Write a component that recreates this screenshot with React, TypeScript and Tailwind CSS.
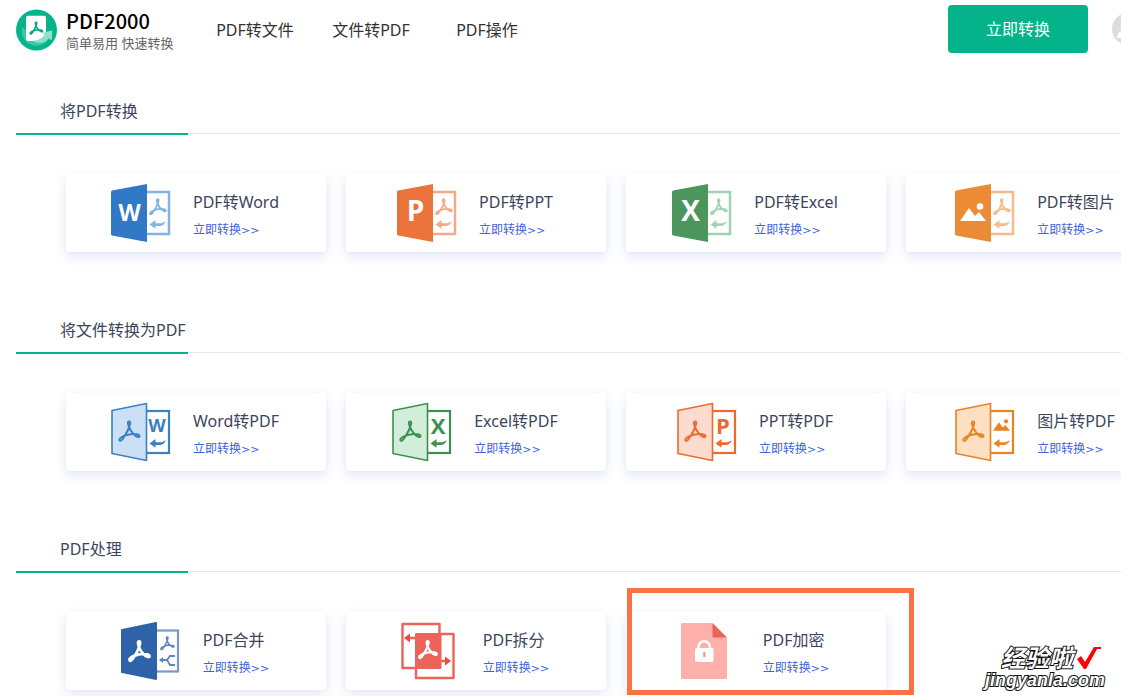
import React from 'react';

const ACROBAT =
  'M11.5 7.5C10.5 11 8.5 14 7 16.5C5 20 3 22.5 1.8 21.5C.3 20 3 17.8 7 16.3C10.5 15 14 14.3 17 14.6C21 14.8 22.8 15.6 22.5 17C22 18.8 18.5 17.3 16.5 15C14.5 13 12.5 10.5 11.5 7.5C10.2 4 9.8 1.5 11.6 1.5C13.5 1.5 12.8 4 11.5 7.5Z';

const Acrobat: React.FC<{ x: number; y: number; size: number; color: string; width: number }> = ({ x, y, size, color, width }) => (
  <svg x={x} y={y} width={size} height={size} viewBox="0 0 24 24" overflow="visible">
    <path d={ACROBAT} fill="none" stroke={color} strokeWidth={width} strokeLinejoin="round" />
  </svg>
);

const BackArrow: React.FC<{ color: string }> = ({ color }) => (
  <path d="M38.5 41.5L44.5 37V40.3H48C51 40.3 53 39.5 54.5 38C54 41.5 51.5 43 48 43H44.5V45.8Z" fill={color} />
);

const Picture: React.FC<{ x: number; y: number; width: number; color: string }> = ({ x, y, width, color }) => (
  <svg x={x} y={y} width={width} height={width} viewBox="0 0 26 26">
    <path d="M0 18L9 5L15 13L19 9L26 18Z" fill={color} />
    <circle cx="20" cy="3.5" r="3.3" fill={color} />
  </svg>
);

// Solid front cover with the source format, outlined PDF page behind
const FromPdfIcon: React.FC<{ front: string; back: string; letter?: string }> = ({ front, back, letter }) => (
  <svg className="h-15 w-15 shrink-0" viewBox="0 0 60 60" aria-hidden="true">
    <rect x="30" y="9" width="28" height="42" fill="#fff" stroke={back} strokeWidth="2.5" />
    <path d="M1 7.5L36 1V59L1 52.5Q0 52 0 51V9Q0 8 1 7.5Z" fill={front} />
    {letter ? (
      <text x="18.5" y="38" textAnchor="middle" fontSize={letter === 'W' ? 23 : 28} fontWeight="700" fill="#fff" className="font-['Open_Sans',sans-serif]">
        {letter}
      </text>
    ) : (
      <Picture x={5} y={20} width={26} color="#fff" />
    )}
    <Acrobat x={38} y={15} size={18} color={back} width={2.4} />
    <BackArrow color={back} />
  </svg>
);

// Outlined PDF cover in front, target format on the page behind
const ToPdfIcon: React.FC<{ line: string; fill: string; letter?: string }> = ({ line, fill, letter }) => (
  <svg className="h-15 w-15 shrink-0" viewBox="0 0 60 60" aria-hidden="true">
    <rect x="30" y="9" width="28" height="42" fill="#fff" stroke={line} strokeWidth="2.2" />
    <path d="M1 8.5L35.5 1.5V58.5L1 51.5Z" fill={fill} stroke={line} strokeWidth="1.6" strokeLinejoin="round" />
    <Acrobat x={7} y={18} size={23} color={line} width={2.1} />
    {letter ? (
      <text x="46" y={letter === 'W' ? 30 : 32} textAnchor="middle" fontSize={letter === 'W' ? 18 : 22} fontWeight="700" fill={line} className="font-['Open_Sans',sans-serif]">
        {letter}
      </text>
    ) : (
      <Picture x={38} y={17} width={17} color={line} />
    )}
    <BackArrow color={line} />
  </svg>
);

const MergeIcon = () => (
  <svg className="h-15 w-15 shrink-0" viewBox="0 0 60 60" aria-hidden="true">
    <rect x="30" y="9.5" width="27" height="41" fill="#fff" stroke="#7799c6" strokeWidth="2.2" />
    <path d="M1 8L35 1Q36 1 36 2V58Q36 59 35 59L1 52Q0 52 0 51V9Q0 8 1 8Z" fill="#2e62a9" />
    <Acrobat x={7} y={19} size={23} color="#fff" width={2.8} />
    <Acrobat x={39} y={15} size={15} color="#5f86bb" width={2.4} />
    <path d="M40 39H46L49 35H54M46 39L49 44H54" fill="none" stroke="#5f86bb" strokeWidth="1.8" />
    <path d="M38 39L42 36V42Z" fill="#5f86bb" />
  </svg>
);

const SplitIcon = () => (
  <svg className="h-15 w-15 shrink-0" viewBox="0 0 60 60" aria-hidden="true">
    <g fill="none" stroke="#ec6359" strokeWidth="2.4" strokeLinejoin="round">
      <path d="M14 47H1.5V3H38.5V12" />
      <path d="M40 13H52.5V57H15V47" />
      <path d="M14 17H7M40 40H46" />
    </g>
    <rect x="14" y="12" width="26.5" height="36" rx="1" fill="#ec6359" />
    <path d="M3 17L9 12.5V21.5ZM50 40L44 35.5V44.5Z" fill="#e84c40" />
    <Acrobat x={17} y={19} size={20} color="#fff" width={2.8} />
  </svg>
);

const LockIcon = () => (
  <svg className="h-15 w-15 shrink-0" viewBox="0 0 60 60" aria-hidden="true">
    <path d="M1 2H31L46 17V57Q46 58 45 58H1Q0 58 0 57V3Q0 2 1 2Z" fill="#fdb1aa" />
    <path d="M31.5 2L46 16.5H32.5Q31.5 16.5 31.5 15.5Z" fill="#ec6359" />
    <path d="M17.5 28V26A5.7 5.7 0 0 1 29 26V28" fill="none" stroke="#fff" strokeWidth="2.4" />
    <rect x="14" y="27" width="18.5" height="14" rx="1.5" fill="#fff" />
    <path d="M23.3 31V36" stroke="#f08a81" strokeWidth="2" />
  </svg>
);

const sections = [
  {
    title: '将PDF转换',
    cards: [
      { name: 'PDF转Word', icon: <FromPdfIcon front="#3179c7" back="#82b4e2" letter="W" /> },
      { name: 'PDF转PPT', icon: <FromPdfIcon front="#eb743c" back="#f4aa88" letter="P" /> },
      { name: 'PDF转Excel', icon: <FromPdfIcon front="#4c965d" back="#a2d2b0" letter="X" /> },
      { name: 'PDF转图片', icon: <FromPdfIcon front="#ec8b36" back="#f3bc8b" /> },
    ],
  },
  {
    title: '将文件转换为PDF',
    cards: [
      { name: 'Word转PDF', icon: <ToPdfIcon line="#3a80c3" fill="#cce0f5" letter="W" /> },
      { name: 'Excel转PDF', icon: <ToPdfIcon line="#3c9152" fill="#d2eedb" letter="X" /> },
      { name: 'PPT转PDF', icon: <ToPdfIcon line="#eb6a32" fill="#fddccf" letter="P" /> },
      { name: '图片转PDF', icon: <ToPdfIcon line="#e98328" fill="#fddfc2" /> },
    ],
  },
  {
    title: 'PDF处理',
    cards: [
      { name: 'PDF合并', icon: <MergeIcon /> },
      { name: 'PDF拆分', icon: <SplitIcon /> },
      { name: 'PDF加密', icon: <LockIcon />, marked: true },
    ],
  },
];

const Logo = () => (
  <svg className="h-[42px] w-[41px] shrink-0" viewBox="0 0 123 126" aria-hidden="true">
    <circle cx="61.5" cy="63" r="61.5" fill="#06b48b" />
    <path d="M18 55C14 85 32 110 60 110C80 110 94 100 101 84L60 88Z" fill="#3fc7a4" />
    <path d="M36 20H84Q90 20 90 26V72C82 90 68 97 52 96H36Q30 96 30 90V26Q30 20 36 20Z" fill="#fff" />
    <path d="M52 95C68 93 80 86 87 77L79 72L109 64L107 95L99 88C86 103 66 106 52 95Z" fill="#8fe0c9" />
    <Acrobat x={40} y={37} size={42} color="#06a981" width={2.8} />
  </svg>
);

const Header = () => (
  <header className="flex h-[58px] items-center pl-4">
    <a href="#" className="flex w-[159px] shrink-0 items-center gap-[9px] pt-[2px]">
      <Logo />
      <span className="flex flex-col pt-[2px]">
        <span className="font-['Noto_Sans_CJK_SC',sans-serif] text-[20px] font-medium leading-6 text-black">PDF2000</span>
        <span className="whitespace-nowrap text-[13px] leading-5 text-[#666]">简单易用 快速转换</span>
      </span>
    </a>
    <nav className="ml-10 flex gap-9 pt-[2px] text-base text-[#333]">
      <a href="#" className="min-w-20 whitespace-nowrap text-center">PDF转文件</a>
      <a href="#" className="min-w-20 whitespace-nowrap text-center">文件转PDF</a>
      <a href="#" className="min-w-20 whitespace-nowrap text-center">PDF操作</a>
    </nav>
    <button type="button" className="ml-auto mr-6 h-12 w-[140px] shrink-0 rounded bg-[#04b38a] text-base text-white">
      立即转换
    </button>
    {/* the avatar runs past the right edge */}
    <div className="w-[9px] shrink-0">
      <svg className="h-8 w-8 max-w-none" viewBox="0 0 32 32" aria-hidden="true">
        <circle cx="16" cy="16" r="16" fill="#ddd" />
        <path d="M5 25C5 20 8 18 12 17C9 12 11 6 16 6C21 6 23 12 20 17C24 18 27 20 27 25Z" fill="#fff" />
      </svg>
    </div>
  </header>
);

const Watermark = () => (
  <div className="pointer-events-none absolute bottom-[6px] right-4 flex flex-col items-end font-bold italic text-white [-webkit-text-stroke:2px_#111] [paint-order:stroke_fill]">
    <div className="flex items-center gap-1 pr-1 text-[24px] leading-6">
      <span>经验啦</span>
      <svg className="h-6 w-6" viewBox="0 0 24 24" aria-hidden="true">
        <path d="M0 13L4 10L8 16L17 1H24V3H20L9 23H7Z" fill="#f00" stroke="none" />
      </svg>
    </div>
    <div className="font-['Liberation_Sans',sans-serif] text-[18px] leading-5">jingyanla.com</div>
  </div>
);

export default function App() {
  return (
    <div className="relative overflow-hidden bg-white pb-[6px] font-['Noto_Sans','Noto_Sans_CJK_SC',sans-serif]">
      <Header />
      <main className="mt-[29px] flex flex-col gap-[54px] pl-4">
        {sections.map((section) => (
          <section key={section.title}>
            <div className="flex h-12 items-start">
              <h2 className="h-12 w-43 shrink-0 whitespace-nowrap border-b-2 border-[#04b38a] pl-11 text-base leading-12 text-[#3d455c]">
                {section.title}
              </h2>
              <div className="h-[47px] grow border-b border-[#e6e6e6]" />
            </div>
            <ul className="mt-[39px] flex gap-5 pl-[50px]">
              {section.cards.map((card) => (
                <li key={card.name} className="relative w-[260px] shrink-0">
                  <a
                    href="#"
                    className="flex h-[78px] items-center justify-center gap-[22px] rounded bg-white pr-[2px] shadow-[0_4px_12px_rgba(70,90,200,0.16)]"
                  >
                    {card.icon}
                    <span className="flex flex-col gap-[6px] whitespace-nowrap pt-1">
                      <span className="text-base leading-6 text-[#3d455c]">{card.name}</span>
                      <span className="text-xs leading-5 text-[#3f63dc]">
                        立即转换<span className="font-['DejaVu_Sans',sans-serif] text-[11px]">&gt;&gt;</span>
                      </span>
                    </span>
                  </a>
                  {'marked' in card && (
                    <div className="pointer-events-none absolute -top-6 left-px h-[107px] w-[287px] border-5 border-[#fb7344]" />
                  )}
                </li>
              ))}
            </ul>
          </section>
        ))}
      </main>
      <Watermark />
    </div>
  );
}
